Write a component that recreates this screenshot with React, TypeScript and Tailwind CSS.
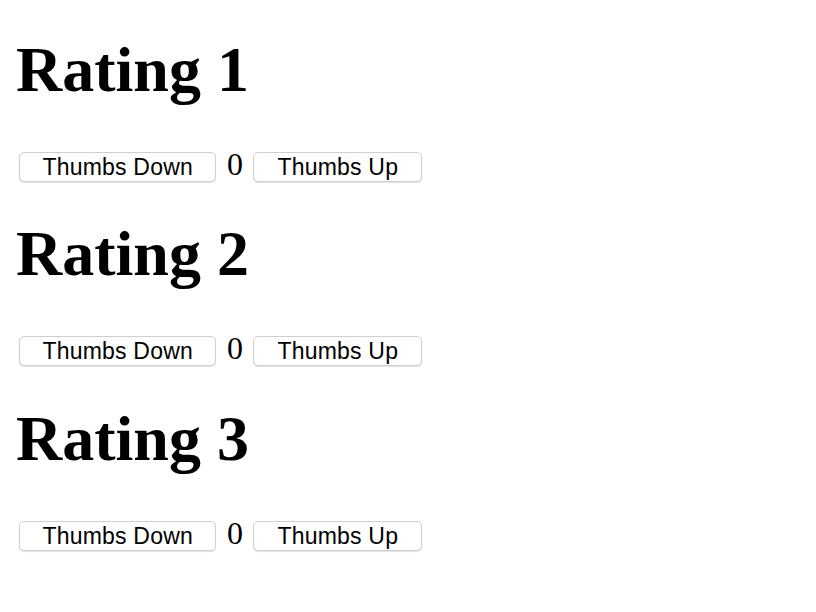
import { useState } from "react";

function Rating({ title }: { title: string }) {
  const [score, setScore] = useState(0);

  return (
    <div>
      <h1 className="font-['Liberation_Serif',serif] text-[64px] font-bold leading-[74px] text-black">
        {title}
      </h1>
      <div className="mt-[45px] flex items-baseline">
        <button
          onClick={() => setScore(s => s - 1)}
          className="ml-[3px] h-[30px] rounded-[5px] border border-[#cfcfcf] bg-white px-[22.5px] font-['Liberation_Sans',Arial,sans-serif] text-[23px] leading-[28px] tracking-[0.2px] text-black shadow-[0_1px_1px_rgba(0,0,0,0.12)]"
        >
          Thumbs Down
        </button>
        <span className="mx-[10.5px] font-['Liberation_Serif',serif] text-[32px] leading-[24px] text-black">
          {score}
        </span>
        <button
          onClick={() => setScore(s => s + 1)}
          className="h-[30px] rounded-[5px] border border-[#cfcfcf] bg-white px-[23px] font-['Liberation_Sans',Arial,sans-serif] text-[23px] leading-[28px] tracking-[0.2px] text-black shadow-[0_1px_1px_rgba(0,0,0,0.12)]"
        >
          Thumbs Up
        </button>
      </div>
    </div>
  );
}

export default function App() {
  return (
    <div className="min-h-screen bg-white px-4 pt-[32.5px]">
      <div className="flex flex-col gap-[35.5px]">
        <Rating title="Rating 1" />
        <Rating title="Rating 2" />
        <Rating title="Rating 3" />
      </div>
    </div>
  );
}
